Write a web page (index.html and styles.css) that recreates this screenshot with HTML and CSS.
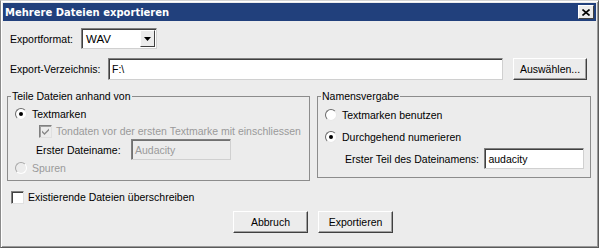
FILE: index.html
```html
<!DOCTYPE html>
<html>
<head>
  <title>Mehrere Dateien exportieren</title>
  <link rel="stylesheet" href="styles.css">
</head>
<body>
<div class="dialog">
  <div class="titlebar">
    <span class="title">Mehrere Dateien exportieren</span>
    <span class="close-btn">
      <svg width="8" height="7" viewBox="0 0 8 7"><path d="M0.5 0.5 L7.5 6.5 M7.5 0.5 L0.5 6.5" stroke="#000" stroke-width="1.6" fill="none"/></svg>
    </span>
  </div>

  <div class="content">
    <!-- Format -->
    <div class="row row-format">
      <span class="label label-format">Exportformat:</span>
      <div class="select">
        <span class="select-value">WAV</span>
        <span class="select-btn">
          <svg width="7" height="4" viewBox="0 0 7 4"><path d="M0 0 H7 L3.5 4 Z" fill="#000"/></svg>
        </span>
      </div>
    </div>

    <!-- Directory -->
    <div class="row row-dir">
      <span class="label label-dir">Export-Verzeichnis:</span>
      <div class="field field-dir">F:\</div>
      <span class="btn btn-browse">Auswählen...</span>
    </div>

    <div class="groups">
      <fieldset class="group group-split">
        <legend>Teile Dateien anhand von</legend>
        <div class="opt opt-marks">
          <span class="radio checked"></span>
          <span>Textmarken</span>
        </div>
        <div class="opt opt-include disabled">
          <span class="check-box disabled checked">
            <svg width="7" height="7" viewBox="0 0 7 7"><path d="M0 2.5 L2.5 5 L7 0.5 V2.5 L2.5 7 L0 4.5 Z" fill="#8a8a8a"/></svg>
          </span>
          <span>Tondaten vor der ersten Textmarke mit einschliessen</span>
        </div>
        <div class="opt opt-first">
          <span class="label label-first">Erster Dateiname:</span>
          <div class="field field-first disabled">Audacity</div>
        </div>
        <div class="opt opt-tracks disabled">
          <span class="radio disabled"></span>
          <span>Spuren</span>
        </div>
      </fieldset>

      <fieldset class="group group-names">
        <legend>Namensvergabe</legend>
        <div class="opt opt-use">
          <span class="radio"></span>
          <span>Textmarken benutzen</span>
        </div>
        <div class="opt opt-number">
          <span class="radio checked"></span>
          <span>Durchgehend numerieren</span>
        </div>
        <div class="opt opt-prefix">
          <span class="label label-prefix">Erster Teil des Dateinamens:</span>
          <div class="field field-prefix">audacity</div>
        </div>
      </fieldset>
    </div>

    <div class="opt opt-overwrite">
      <span class="check-box"></span>
      <span>Existierende Dateien überschreiben</span>
    </div>

    <div class="actions">
      <span class="btn btn-action">Abbruch</span>
      <span class="btn btn-action">Exportieren</span>
    </div>
  </div>
</div>
</body>
</html>
```

FILE: styles.css
```css
/* Reset default margin and use the dialog font */
body {
  margin: 0;
  padding: 0;
  font-family: "Liberation Sans", Arial, sans-serif;
  font-size: 10.5px;
  color: #000;
  background: #ececec;
}

/* Window frame */
.dialog {
  width: 599px;
  height: 248px;
  box-sizing: border-box;
  border: 1px solid;
  border-color: #d4d4d4 #5a5a5a #5a5a5a #8a8a8a;
  box-shadow: inset 1px 1px 0 #fff, inset -1px -1px 0 #9a9a9a;
  padding: 2px;
  background: #ececec;
}

/* Title bar */
.titlebar {
  height: 18px;
  background: #21407c;
  color: #fff;
  display: flex;
  align-items: center;
  justify-content: space-between;
  padding: 0 2px 0 2px;
}

.title {
  font-family: "DejaVu Sans", Verdana, sans-serif;
  font-weight: bold;
  font-size: 10px;
}

.close-btn {
  width: 14px;
  height: 12px;
  background: #ececec;
  border: 1px solid;
  border-color: #fff #404040 #404040 #fff;
  display: flex;
  align-items: center;
  justify-content: center;
}

.content {
  padding: 7px 0 0 4px;
}

/* Generic rows */
.row {
  display: flex;
  align-items: center;
  padding-left: 3px;
}

.row-format {
  height: 21px;
}

.row-dir {
  height: 22px;
  margin-top: 9px;
}

.label-format {
  width: 71px;
}

.label-dir {
  width: 98px;
}

/* Sunken fields */
.field,
.select {
  box-sizing: border-box;
  background: #fff;
  border: 1px solid;
  border-color: #808080 #d0d0d0 #d0d0d0 #808080;
  box-shadow: inset 1px 1px 0 #404040;
}

.field {
  display: flex;
  align-items: center;
  padding-left: 3px;
}

.select {
  width: 76px;
  height: 21px;
  display: flex;
  align-items: center;
  justify-content: space-between;
  padding: 1px 1px 1px 4px;
}

.select-value {
  font-size: 11.5px;
}

.select-btn {
  width: 15px;
  height: 17px;
  box-sizing: border-box;
  background: #ececec;
  border: 1px solid;
  border-color: #fff #404040 #404040 #fff;
  display: flex;
  align-items: center;
  justify-content: center;
}

.field-dir {
  width: 395px;
  height: 22px;
}

/* Raised buttons */
.btn {
  box-sizing: border-box;
  display: flex;
  align-items: center;
  justify-content: center;
  background: #ececec;
  border: 1px solid;
  border-color: #fff #404040 #404040 #fff;
  box-shadow: inset -1px -1px 0 #a0a0a0;
}

.btn-browse {
  width: 74px;
  height: 22px;
  margin-left: 10px;
}

/* Group boxes */
.groups {
  display: flex;
  align-items: flex-start;
  margin-top: 10px;
}

.group {
  margin: 0;
  border: 1px solid #8c8c8c;
  box-sizing: border-box;
  min-width: 0;
}

.group legend {
  padding: 0 1px;
  margin-left: -4px;
  line-height: 13px;
}

.group-split {
  width: 303px;
  height: 91px;
  padding: 4px 6px 0 7px;
}

.group-names {
  width: 274px;
  height: 88px;
  margin-left: 7px;
  padding: 5px 6px 0 7px;
}

/* Option rows */
.opt {
  display: flex;
  align-items: center;
  height: 14px;
  white-space: nowrap;
}

.disabled {
  color: #9a9a9a;
}

.opt-include {
  margin-top: 3px;
  padding-left: 24px;
}

.opt-first {
  height: 21px;
  margin-top: 1px;
  padding-left: 21px;
  color: #000;
}

.label-first {
  width: 95px;
}

.field-first {
  width: 100px;
  height: 21px;
  background: #ececec;
  color: #9a9a9a;
  box-shadow: inset 1px 1px 0 #707070;
}

.opt-tracks {
  margin-top: 1px;
}

.opt-number {
  margin-top: 8px;
}

.opt-prefix {
  height: 21px;
  margin-top: 4px;
  padding-left: 20px;
}

.label-prefix {
  width: 140px;
}

.field-prefix {
  width: 100px;
  height: 21px;
}

/* Radio buttons */
.radio {
  width: 12px;
  height: 12px;
  box-sizing: border-box;
  border-radius: 50%;
  border: 1px solid;
  border-color: #6a6a6a #e8e8e8 #e8e8e8 #6a6a6a;
  background: #fff;
  margin-right: 5px;
  display: flex;
  align-items: center;
  justify-content: center;
}

.radio.checked::after {
  content: "";
  width: 4px;
  height: 4px;
  border-radius: 50%;
  background: #000;
}

.radio.disabled {
  background: #ececec;
  border-color: #a8a8a8 #fff #fff #a8a8a8;
}

/* Check boxes */
.check-box {
  width: 13px;
  height: 13px;
  box-sizing: border-box;
  border: 1px solid;
  border-color: #808080 #e0e0e0 #e0e0e0 #808080;
  box-shadow: inset 1px 1px 0 #404040;
  background: #fff;
  margin-right: 4px;
  display: flex;
  align-items: center;
  justify-content: center;
}

.check-box.disabled {
  background: #ececec;
  box-shadow: inset 1px 1px 0 #a0a0a0;
}

.opt-overwrite {
  margin-top: 9px;
  padding-left: 4px;
}

/* Bottom buttons */
.actions {
  display: flex;
  gap: 10px;
  margin-top: 7px;
  padding-left: 226px;
}

.btn-action {
  width: 75px;
  height: 22px;
}
```
